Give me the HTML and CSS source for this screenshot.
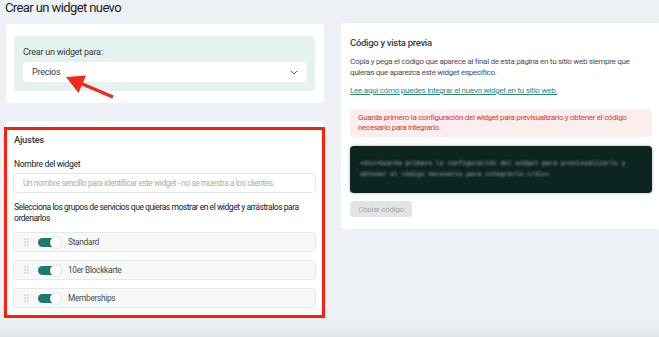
FILE: index.html
```html
<!DOCTYPE html>
<html>
<head>
  <meta charset="utf-8">
  <link rel="stylesheet" href="styles.css">
</head>
<body>
  <h1 class="page-title">Crear un widget nuevo</h1>

  <div class="layout">
    <div class="col-left">
      <section class="card card-target">
        <div class="target-box">
          <div class="target-label">Crear un widget para:</div>
          <div class="select">
            <span>Precios</span>
            <svg class="chevron" width="8" height="5" viewBox="0 0 8 5">
              <path d="M1 1l3 3 3-3" fill="none" stroke="#5a5f63" stroke-width="1" stroke-linecap="round" stroke-linejoin="round"/>
            </svg>
          </div>
        </div>
        <!-- annotation arrow -->
        <svg class="annot-arrow" width="60" height="30" viewBox="0 0 60 30">
          <line x1="52" y1="25" x2="19" y2="11" stroke="#ee2b1c" stroke-width="3.4"/>
          <polygon points="5,5 25,3.5 17.5,21" fill="#ee2b1c"/>
        </svg>
      </section>

      <section class="card card-settings">
        <div class="annot-frame"></div>
        <h2 class="card-title">Ajustes</h2>
        <div class="field-label">Nombre del widget</div>
        <div class="input">Un nombre sencillo para identificar este widget - no se muestra a los clientes.</div>
        <div class="field-label groups-label">Selecciona los grupos de servicios que quieras mostrar en el widget y arrástralos para ordenarlos</div>
        <ul class="group-list">
          <li class="group-row">
            <svg class="drag" width="5" height="8" viewBox="0 0 5 8"><g fill="#cdd2d2"><circle cx="1" cy="1" r="0.9"/><circle cx="4" cy="1" r="0.9"/><circle cx="1" cy="4" r="0.9"/><circle cx="4" cy="4" r="0.9"/><circle cx="1" cy="7" r="0.9"/><circle cx="4" cy="7" r="0.9"/></g></svg>
            <span class="toggle"><span class="knob"></span></span>
            <span class="group-name">Standard</span>
          </li>
          <li class="group-row">
            <svg class="drag" width="5" height="8" viewBox="0 0 5 8"><g fill="#cdd2d2"><circle cx="1" cy="1" r="0.9"/><circle cx="4" cy="1" r="0.9"/><circle cx="1" cy="4" r="0.9"/><circle cx="4" cy="4" r="0.9"/><circle cx="1" cy="7" r="0.9"/><circle cx="4" cy="7" r="0.9"/></g></svg>
            <span class="toggle"><span class="knob"></span></span>
            <span class="group-name">10er Blockkarte</span>
          </li>
          <li class="group-row">
            <svg class="drag" width="5" height="8" viewBox="0 0 5 8"><g fill="#cdd2d2"><circle cx="1" cy="1" r="0.9"/><circle cx="4" cy="1" r="0.9"/><circle cx="1" cy="4" r="0.9"/><circle cx="4" cy="4" r="0.9"/><circle cx="1" cy="7" r="0.9"/><circle cx="4" cy="7" r="0.9"/></g></svg>
            <span class="toggle"><span class="knob"></span></span>
            <span class="group-name">Memberships</span>
          </li>
        </ul>
      </section>
    </div>

    <section class="card card-code">
      <h2 class="card-title">Código y vista previa</h2>
      <p class="intro">Copia y pega el código que aparece al final de esta página en tu sitio web siempre que quieras que aparezca este widget específico.</p>
      <a class="help-link" href="#">Lee aquí cómo puedes integrar el nuevo widget en tu sitio web.</a>
      <div class="alert">Guarda primero la configuración del widget para previsualizarlo y obtener el código necesario para integrarlo.</div>
      <div class="code-block">
        <code>&lt;div&gt;Guarda primero la configuración del widget para previsualizarlo y obtener el código necesario para integrarlo.&lt;/div&gt;</code>
      </div>
      <button class="copy-btn" disabled>Copiar código</button>
    </section>
  </div>
</body>
</html>
```

FILE: styles.css
```css
* {
  margin: 0;
  padding: 0;
  box-sizing: border-box;
}

body {
  width: 659px;
  height: 337px;
  overflow: hidden;
  padding-left: 6px;
  background: linear-gradient(to bottom, #edf0f4 0, #edf0f4 326px, #e1e4e8 337px);
  font-family: Roboto, 'Liberation Sans', sans-serif;
  color: #2d3033;
  -webkit-font-smoothing: antialiased;
}

.page-title {
  font-size: 13px;
  font-weight: 400;
  line-height: 16px;
  letter-spacing: -0.6px;
  margin: 0 0 7px -1px;
  color: #1e2226;
}

.layout {
  display: flex;
  align-items: flex-start;
  gap: 17px;
}

.col-left {
  width: 318px;
  flex: none;
  margin-top: 1px;
  display: flex;
  flex-direction: column;
  gap: 18px;
}

.card {
  background: #fff;
  border-radius: 4px;
  position: relative;
}

/* widget target */
.card-target {
  padding: 12px 9px 12px 8px;
}

.target-box {
  background: #e5f2f0;
  border-radius: 4px;
  padding: 10px 8px 9px 9px;
}

.target-label {
  font-size: 9px;
  line-height: 12px;
  letter-spacing: -0.25px;
  color: #33373a;
  margin-bottom: 4px;
}

.select {
  height: 20px;
  background: #fff;
  border-radius: 4px;
  display: flex;
  align-items: center;
  justify-content: space-between;
  padding: 0 9px;
  font-size: 9px;
  letter-spacing: -0.25px;
  color: #3a3e41;
}

.annot-arrow {
  position: absolute;
  left: 55px;
  top: 48px;
}

/* settings */
.card-settings {
  padding: 13px 8px 10px 7px;
}

.annot-frame {
  position: absolute;
  left: -2px;
  top: 6px;
  width: 321px;
  height: 191px;
  border: 3px solid #fe1f0b;
  pointer-events: none;
}

.card-title {
  font-size: 9.5px;
  font-weight: 500;
  line-height: 12px;
  letter-spacing: -0.3px;
  color: #3a3e41;
  padding-left: 1px;
}

.field-label {
  font-size: 8.5px;
  font-weight: 400;
  line-height: 12px;
  letter-spacing: -0.3px;
  color: #15191c;
  margin-top: 12px;
  padding-left: 1px;
}

.input {
  margin-top: 3px;
  height: 20px;
  border: 1px solid #e4e7e9;
  border-radius: 4px;
  display: flex;
  align-items: center;
  padding-left: 9px;
  font-size: 8.3px;
  letter-spacing: -0.42px;
  color: #a9adb0;
}

.groups-label {
  margin-top: 9px;
  line-height: 11px;
  letter-spacing: -0.45px;
}

.group-list {
  list-style: none;
  margin-top: 8px;
  display: flex;
  flex-direction: column;
  gap: 8px;
}

.group-row {
  height: 20px;
  background: #f7f8f8;
  border: 1px solid #e7e9e9;
  border-radius: 4px;
  display: flex;
  align-items: center;
  padding-left: 10px;
}

.drag {
  flex: none;
}

.toggle {
  margin-left: 9px;
  width: 23px;
  height: 11px;
  position: relative;
  flex: none;
}

.toggle::before {
  content: "";
  position: absolute;
  left: 0;
  top: 1px;
  width: 20px;
  height: 9px;
  border-radius: 5px;
  background: #1d7a6b;
}

.knob {
  position: absolute;
  right: 0;
  top: 0;
  width: 11px;
  height: 11px;
  border-radius: 50%;
  background: #fff;
  box-shadow: 0 0 2px rgba(0, 0, 0, 0.25);
}

.group-name {
  margin-left: 7px;
  font-size: 8.3px;
  letter-spacing: -0.3px;
  color: #46494c;
}

/* code and preview */
.card-code {
  width: 320px;
  flex: none;
  padding: 14px 9px 12px 9px;
}

.card-code .card-title {
  padding-left: 0;
}

.intro {
  margin-top: 8px;
  font-size: 8px;
  line-height: 10.5px;
  letter-spacing: -0.3px;
  color: #4a4e51;
}

.help-link {
  display: block;
  margin-top: 8px;
  font-size: 8px;
  line-height: 10px;
  letter-spacing: -0.25px;
  color: #2a8a78;
  text-decoration: underline;
}

.alert {
  margin-top: 13px;
  background: #fbeeee;
  border-radius: 4px;
  padding: 4px 8px;
  font-size: 8px;
  line-height: 10px;
  letter-spacing: -0.3px;
  color: #d3363b;
}

.code-block {
  margin-top: 9px;
  height: 47px;
  background: #0c2521;
  border-radius: 4px;
  box-shadow: 0 0 3px rgba(0, 0, 0, 0.35);
  padding: 12px 12px 0 10px;
}

.code-block code {
  display: block;
  font-family: 'DejaVu Sans Mono', 'Liberation Mono', monospace;
  font-size: 6.3px;
  line-height: 10.5px;
  color: #a3b0ad;
  filter: blur(1.1px);
}

.copy-btn {
  display: block;
  margin-top: 8px;
  width: 62px;
  height: 16px;
  border: none;
  border-radius: 4px;
  background: #e3e4e5;
  font-family: inherit;
  font-size: 8px;
  letter-spacing: -0.3px;
  color: #a6a8aa;
}
```
